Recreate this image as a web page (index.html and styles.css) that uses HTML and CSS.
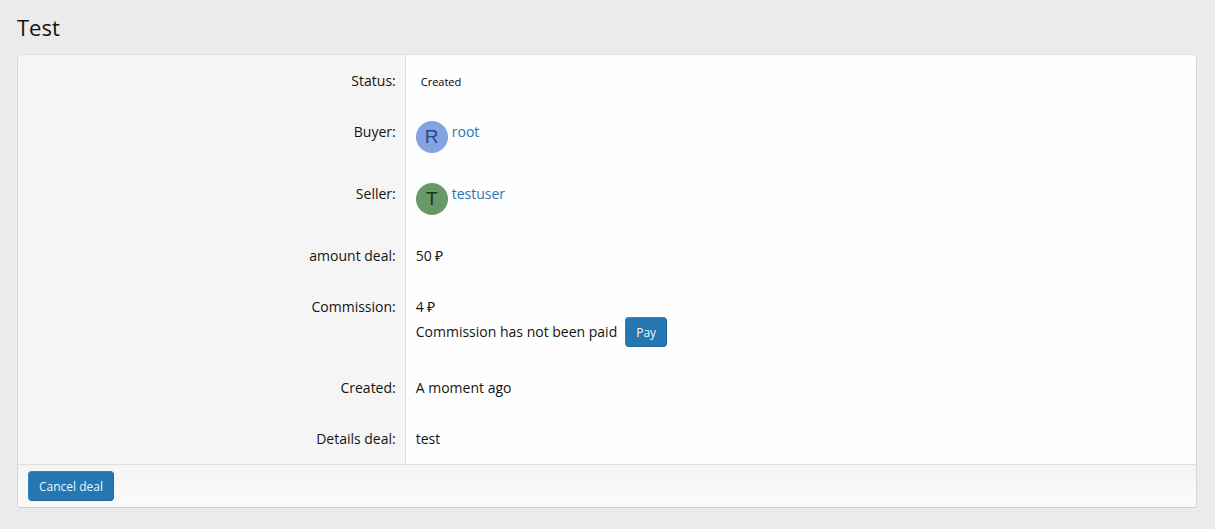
FILE: index.html
```html
<!DOCTYPE html>
<html lang="en">

<head>
    <meta charset="UTF-8">
    <meta name="viewport" content="width=device-width, initial-scale=1.0">
    <title>Test</title>
    <link rel="stylesheet" href="styles.css">
</head>

<body>
    <!-- Deal title -->
    <h1 class="page-title">Test</h1>

    <div class="block">
        <!-- Deal information -->
        <div class="block-body">
            <dl class="row">
                <dt>Status:</dt>
                <dd><span class="label">Created</span></dd>
            </dl>
            <dl class="row">
                <dt>Buyer:</dt>
                <dd class="user">
                    <span class="avatar avatar-root" aria-hidden="true">R</span>
                    <a class="username" href="#">root</a>
                </dd>
            </dl>
            <dl class="row">
                <dt>Seller:</dt>
                <dd class="user">
                    <span class="avatar avatar-testuser" aria-hidden="true">T</span>
                    <a class="username" href="#">testuser</a>
                </dd>
            </dl>
            <dl class="row">
                <dt>amount deal:</dt>
                <dd>50 ₽</dd>
            </dl>
            <dl class="row">
                <dt>Commission:</dt>
                <dd>
                    <div>4 ₽</div>
                    <div class="payment">
                        <span>Commission has not been paid</span>
                        <button type="button" class="button">Pay</button>
                    </div>
                </dd>
            </dl>
            <dl class="row">
                <dt>Created:</dt>
                <dd>A moment ago</dd>
            </dl>
            <dl class="row">
                <dt>Details deal:</dt>
                <dd>test</dd>
            </dl>
        </div>

        <!-- Actions -->
        <div class="block-footer">
            <button type="button" class="button">Cancel deal</button>
        </div>
    </div>
</body>

</html>
```

FILE: styles.css
```css
* {
    box-sizing: border-box;
}

body {
    margin: 0;
    padding: 11px 18px 21px 17px;
    background-color: #ebebeb;
    color: #141414;
    font-family: 'Segoe UI', 'Open Sans', sans-serif;
    font-size: 14px;
    line-height: 21px;
}

/* Page title */
.page-title {
    margin: 0 0 11px;
    font-size: 22px;
    font-weight: 400;
    line-height: 32px;
}

/* Main container */
.block {
    background-color: #fefefe;
    border: 1px solid #d8d8d8;
    border-top-color: #dfdfdf;
    border-bottom-color: #c9cccc;
    border-radius: 4px;
    overflow: hidden;
}

/* Label and value rows */
.row {
    display: flex;
    margin: 0;
}

.row dt {
    width: calc(33% - 1px);
    padding: 15px 9px 15px 10px;
    background-color: #f5f5f5;
    border-right: 1px solid #dfdfdf;
    text-align: right;
}

.row dd {
    flex: 1;
    margin: 0;
    padding: 15px 10px;
}

/* Deal status */
.label {
    display: block;
    padding: 2px 6px 0 5px;
    color: #000000;
    font-size: 11px;
    line-height: 19px;
}

/* Buyer and seller */
.row .user {
    display: flex;
    align-items: flex-start;
    gap: 4px;
}

.avatar {
    width: 32px;
    height: 32px;
    border-radius: 50%;
    font-family: 'Liberation Sans', Arial, sans-serif;
    font-size: 19px;
    line-height: 31px;
    text-align: center;
}

.avatar-root {
    background-color: #85a3e0;
    color: #24478f;
}

.avatar-testuser {
    background-color: #669966;
    color: #1f2e1f;
}

.username {
    color: #2577b1;
    text-decoration: none;
}

.username:hover {
    text-decoration: underline;
}

/* Commission payment */
.payment {
    display: flex;
    gap: 8px;
}

.payment span {
    padding-top: 4px;
}

/* Buttons */
.button {
    height: 30px;
    padding: 0 10px;
    background-color: #2577b1;
    border: 1px solid;
    border-color: #2a86c8 #20689b #20689b #2a86c8;
    border-radius: 4px;
    color: #edf6fd;
    font-family: inherit;
    font-size: 12px;
    cursor: pointer;
}

.button:hover {
    background-color: #2a86c8;
}

.block-footer {
    padding: 6px 10px;
    background: linear-gradient(#f5f5f5, #fafafa);
    border-top: 1px solid #dfdfdf;
}

.block-footer .button {
    display: block;
}
```
